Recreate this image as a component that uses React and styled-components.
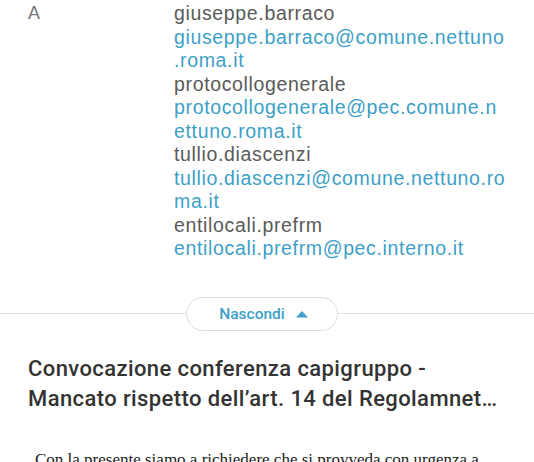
import React from "react";
import styled, { createGlobalStyle } from "styled-components";

const Global = createGlobalStyle`
  html, body { margin: 0; padding: 0; background: #ffffff; }
  body { overflow: hidden; }
`;

const Page = styled.div`
  width: 534px;
  height: 462px;
  overflow: hidden;
  background: #ffffff;
  font-family: "Liberation Sans", Arial, sans-serif;
`;

const Recipients = styled.section`
  display: grid;
  grid-template-columns: 146px 1fr;
  padding: 2px 0 0 28px;
`;

const Label = styled.div`
  font-size: 18px;
  line-height: 23.5px;
  color: #777777;
`;

const List = styled.div`
  display: flex;
  flex-direction: column;
  font-size: 19.5px;
  line-height: 23.5px;
  letter-spacing: 0.65px;
`;

const Line = styled.div`
  color: ${(p) => (p.$link ? "#3d9fc7" : "#5a5a5a")};
  white-space: nowrap;
`;

const Divider = styled.div`
  display: flex;
  align-items: center;
  margin-top: 36px;
`;

const Rule = styled.div`
  height: 1px;
  background: #e2e2e2;
  flex: ${(p) => (p.$fixed ? "0 0 186px" : "1 1 auto")};
`;

const Pill = styled.button`
  display: flex;
  align-items: center;
  justify-content: center;
  gap: 10px;
  width: 152px;
  height: 34px;
  box-sizing: border-box;
  border: 1px solid #dedede;
  border-radius: 17px;
  background: #ffffff;
  padding: 0 0 0 4px;
  font-family: Roboto, "Liberation Sans", sans-serif;
  font-size: 15.5px;
  font-weight: 500;
  color: #3d9fc7;
  cursor: pointer;
`;

const Title = styled.h1`
  margin: 23px 0 0 0;
  padding: 0 10px 0 28px;
  font-family: Roboto, "Liberation Sans", sans-serif;
  font-weight: 500;
  font-size: 22px;
  letter-spacing: 0.4px;
  line-height: 30px;
  color: #333333;
  white-space: pre-line;
`;

const Body = styled.p`
  margin: 35px 0 0 0;
  padding-left: 35px;
  font-family: "Liberation Serif", "Times New Roman", serif;
  font-size: 17px;
  line-height: 22px;
  color: #222222;
  white-space: nowrap;
`;

const lines = [
  { t: "giuseppe.barraco" },
  { t: "giuseppe.barraco@comune.nettuno", link: true },
  { t: ".roma.it", link: true },
  { t: "protocollogenerale" },
  { t: "protocollogenerale@pec.comune.n", link: true },
  { t: "ettuno.roma.it", link: true },
  { t: "tullio.diascenzi" },
  { t: "tullio.diascenzi@comune.nettuno.ro", link: true },
  { t: "ma.it", link: true },
  { t: "entilocali.prefrm" },
  { t: "entilocali.prefrm@pec.interno.it", link: true },
];

export default function App() {
  return (
    <Page>
      <Global />
      <Recipients>
        <Label>A</Label>
        <List>
          {lines.map((l, i) => (
            <Line key={i} $link={l.link}>
              {l.t}
            </Line>
          ))}
        </List>
      </Recipients>
      <Divider>
        <Rule $fixed />
        <Pill>
          Nascondi
          <svg width="14" height="8" viewBox="0 0 14 8">
            <path d="M1 7.5 L7 1 L13 7.5 Z" fill="#3d9fc7" />
          </svg>
        </Pill>
        <Rule />
      </Divider>
      <Title>
        {"Convocazione conferenza capigruppo -\nMancato rispetto dell’art. 14 del Regolamnet…"}
      </Title>
      <Body>Con la presente siamo a richiedere che si provveda con urgenza a</Body>
    </Page>
  );
}
